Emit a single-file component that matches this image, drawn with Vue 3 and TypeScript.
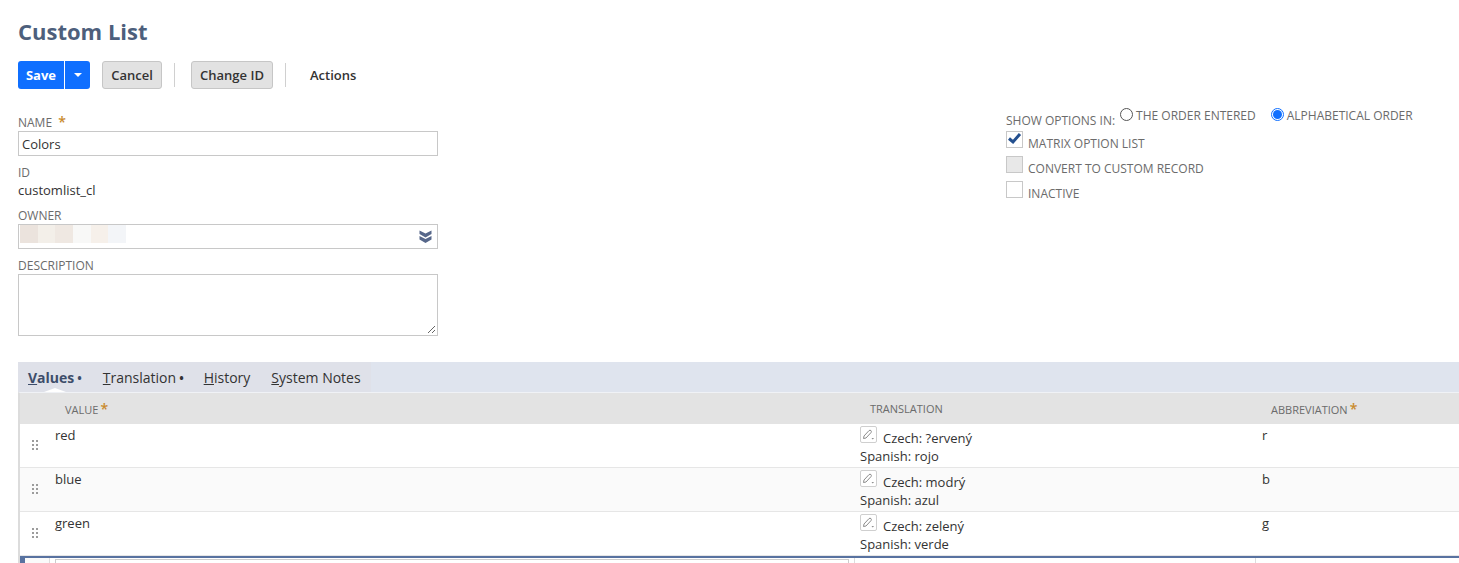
<script setup lang="ts">
interface Row { value: string; czech: string; spanish: string; abbr: string }
const rows: Row[] = [
  { value: 'red', czech: '?ervený', spanish: 'rojo', abbr: 'r' },
  { value: 'blue', czech: 'modrý', spanish: 'azul', abbr: 'b' },
  { value: 'green', czech: 'zelený', spanish: 'verde', abbr: 'g' },
]
const swatches = ['#ebe3dd', '#f3efe9', '#efe8e2', '#f8f8f7', '#f6f0ea', '#f3f5f8']
</script>

<template>
  <div class="page">
    <h1 class="title">Custom List</h1>

    <div class="toolbar">
      <div class="save">
        <span class="save-main">Save</span>
        <span class="save-arrow"><i class="caret"></i></span>
      </div>
      <button class="btn cancel">Cancel</button>
      <span class="sep sep-a"></span>
      <button class="btn change">Change ID</button>
      <span class="sep sep-b"></span>
      <span class="actions">Actions</span>
    </div>

    <div class="form">
      <div class="col-left">
        <div class="lbl name-lbl">NAME <span class="star name-star">*</span></div>
        <div class="input name-input">Colors</div>
        <div class="lbl id-lbl">ID</div>
        <div class="id-val">customlist_cl</div>
        <div class="lbl owner-lbl">OWNER</div>
        <div class="input owner-input">
          <div class="blur">
            <span v-for="(c, i) in swatches" :key="i" class="swatch" :style="{ background: c }"></span>
          </div>
          <svg class="dbl" width="13" height="13" viewBox="0 0 13 13">
            <path d="M0.5 0.5 L6.5 3.5 L12.5 0.5 V4 L6.5 7.5 L0.5 4 Z" fill="#56678a" />
            <path d="M0.5 6 L6.5 9 L12.5 6 V9.5 L6.5 13 L0.5 9.5 Z" fill="#56678a" />
          </svg>
        </div>
        <div class="lbl desc-lbl">DESCRIPTION</div>
        <div class="input desc-input">
          <svg class="grip" width="9" height="9" viewBox="0 0 9 9">
            <path d="M1 8 L8 1 M5 8 L8 5" stroke="#666" stroke-width="1" fill="none" />
          </svg>
        </div>
      </div>

      <div class="col-right">
        <div class="radios">
          <span class="lbl show-lbl">SHOW OPTIONS IN:</span>
          <span class="radio"></span>
          <span class="lbl radio-txt first">THE ORDER ENTERED</span>
          <span class="radio on"><i></i></span>
          <span class="lbl radio-txt">ALPHABETICAL ORDER</span>
        </div>
        <div class="check-row">
          <span class="check">
            <svg width="15" height="13" viewBox="0 0 15 13">
              <path d="M2 6.5 L6 10 L13 2" stroke="#24508f" stroke-width="3" fill="none" />
            </svg>
          </span>
          <span class="lbl">MATRIX OPTION LIST</span>
        </div>
        <div class="check-row">
          <span class="check disabled"></span>
          <span class="lbl">CONVERT TO CUSTOM RECORD</span>
        </div>
        <div class="check-row">
          <span class="check"></span>
          <span class="lbl">INACTIVE</span>
        </div>
      </div>
    </div>

    <div class="tabs-band">
      <div class="tabs">
        <span class="tab active"><u>V</u>alues<b class="dot">•</b></span>
        <span class="tab"><u>T</u>ranslation<b class="dot">•</b></span>
        <span class="tab wide"><u>H</u>istory</span>
        <span class="tab"><u>S</u>ystem Notes</span>
        <i class="notch"></i>
      </div>
    </div>

    <div class="grid">
      <div class="grid-head">
        <span class="c-value head-txt">VALUE<span class="star">*</span></span>
        <span class="c-trans head-txt">TRANSLATION</span>
        <span class="c-abbr head-txt">ABBREVIATION<span class="star">*</span></span>
      </div>
      <div v-for="(r, i) in rows" :key="r.value" class="grid-row" :class="{ alt: i === 1 }">
        <span class="drag"><i v-for="n in 6" :key="n"></i></span>
        <span class="cell-value">{{ r.value }}</span>
        <div class="cell-trans">
          <div class="line-1">
            <span class="edit">
              <svg width="15" height="15" viewBox="0 0 15 15">
                <path d="M2.5 11.5 L3 9 L8 3.6 Q9 2.8 10 3.6 Q10.8 4.6 10 5.6 L5 11 Z" fill="none" stroke="#8c8c8c" stroke-width="1" />
                <path d="M10.5 11 L13 11 L11.75 12.5 Z" fill="#8c8c8c" />
              </svg>
            </span>
            <span>Czech: {{ r.czech }}</span>
          </div>
          <div class="line-2">Spanish: {{ r.spanish }}</div>
        </div>
        <span class="cell-abbr">{{ r.abbr }}</span>
      </div>
      <div class="edit-row">
        <span class="edit-marker"></span>
        <span class="edit-drag"></span>
        <span class="edit-input"></span>
        <span class="edit-trans"></span>
        <span class="edit-abbr"></span>
      </div>
    </div>
  </div>
</template>

<style>
html, body { margin: 0; background: #fff; overflow: hidden; }
</style>

<style scoped>
.page {
  width: 1459px;
  height: 563px;
  overflow: hidden;
  font-family: "Open Sans", sans-serif;
  font-size: 13px;
  color: #333;
  box-sizing: border-box;
  padding-top: 16px;
}
.title {
  margin: 0 0 0 18px;
  font-size: 22px;
  line-height: 30px;
  font-weight: 700;
  color: #4d5f7c;
}
.toolbar {
  display: flex;
  align-items: center;
  margin: 15px 0 0 18px;
  height: 28px;
}
.save {
  display: flex;
  height: 28px;
  width: 72px;
  background: #0f6fff;
  border-radius: 3px;
  color: #fff;
  font-weight: 700;
}
.save-main {
  width: 46px;
  text-align: center;
  line-height: 28px;
  border-right: 1px solid #fff;
  box-sizing: content-box;
}
.save-arrow { flex: 1; display: flex; align-items: center; justify-content: center; }
.caret {
  border-left: 4px solid transparent;
  border-right: 4px solid transparent;
  border-top: 4px solid #fff;
}
.btn {
  height: 28px;
  padding: 0;
  background: #e2e2e2;
  border: 1px solid #c6c6c6;
  border-radius: 3px;
  font: 600 13px "Open Sans", sans-serif;
  color: #333;
  box-sizing: border-box;
}
.cancel { width: 60px; margin-left: 12px; }
.change { width: 82px; margin-left: 16px; }
.sep { width: 1px; height: 24px; background: #d0d0d0; }
.sep-a { margin-left: 12px; }
.sep-b { margin-left: 12px; }
.actions { margin-left: 24px; font-weight: 600; color: #333; }

.form { display: flex; height: 273px; }
.col-left { margin-left: 18px; width: 420px; padding-top: 25px; }
.col-right { margin-left: 568px; padding-top: 19px; }
.lbl { font-size: 12px; color: #6b6b6b; line-height: 16px; }
.star { color: #c98a2c; font-weight: 600; }
.name-star { margin-left: 3px; font-size: 14px; }
.name-lbl { height: 17px; }
.input {
  border: 1px solid #c8c8c8;
  box-sizing: border-box;
  width: 420px;
  background: #fff;
}
.name-input { height: 25px; line-height: 25px; padding-left: 3px; }
.id-lbl { margin-top: 9px; }
.id-val { line-height: 18px; }
.owner-lbl { margin-top: 9px; }
.owner-input { height: 25px; position: relative; }
.blur { display: flex; margin: 0 0 0 1px; height: 18px; }
.swatch { width: 17.7px; height: 18px; }
.dbl { position: absolute; right: 5px; top: 5px; }
.desc-lbl { margin-top: 9px; }
.desc-input { height: 62px; position: relative; }
.grip { position: absolute; right: 1px; bottom: 1px; }

.radios { display: flex; align-items: flex-start; height: 23px; }
.show-lbl { margin-top: 5px; }
.radio {
  width: 11px; height: 11px;
  border: 1px solid #555;
  border-radius: 50%;
  margin: 0 0 0 5px;
  display: flex; align-items: center; justify-content: center;
  flex: none;
}
.radio.on { border-color: #0f6fff; margin-left: 15px; }
.radio.on i { width: 9px; height: 9px; background: #0f6fff; border-radius: 50%; }
.radio-txt { margin-left: 3px; }
.check-row { display: flex; height: 25px; }
.check-row .lbl { margin: 5px 0 0 5px; }
.check {
  width: 17px; height: 17px;
  box-sizing: border-box;
  border: 1px solid #c8c8c8;
  background: #fff;
  display: block;
  flex: none;
  line-height: 0;
}
.check.disabled { background: #e8e8e8; }

.tabs-band {
  margin-left: 18px;
  height: 30px;
  background: #dfe4ee;
}
.tabs {
  position: relative;
  display: flex;
  align-items: center;
  height: 30px;
  width: 353px;
  background: #dfe1e9;
  padding-left: 10px;
  box-sizing: border-box;
  font-size: 14px;
  color: #333;
  white-space: nowrap;
}
.tab { margin-right: 20px; }
.tab.active { font-weight: 700; color: #3d4d6a; margin-right: 21px; }
.tab.wide { margin-right: 21px; }
.dot { margin-left: 3px; font-size: 12px; font-weight: 700; }
.notch {
  position: absolute;
  left: 26px; bottom: 0;
  border-left: 11px solid transparent;
  border-right: 11px solid transparent;
  border-bottom: 4px solid #fff;
}

.grid {
  margin-left: 18px;
  border-left: 2px solid #dcdcdc;
  border-top: 1px solid #f0f2f6;
}
.grid-head {
  display: flex;
  height: 31px;
  background: #e3e3e3;
  align-items: center;
  position: relative;
}
.head-txt { font-size: 11px; color: #6b6b6b; }
.head-txt .star { font-size: 14px; margin-left: 2px; }
.c-value { margin-left: 45px; width: 805px; }
.c-trans { width: 401px; }
.grid-row {
  display: flex;
  height: 43px;
  border-bottom: 1px solid #e6e6e6;
  background: #fff;
}
.grid-row.alt { background: #fafafa; }
.drag {
  width: 6px;
  margin: 16px 0 0 12px;
  display: grid;
  grid-template-columns: 2px 2px;
  column-gap: 2px;
  row-gap: 2px;
  grid-auto-rows: 2px;
  align-content: start;
}
.drag i { background: #9c9c9c; }
.cell-value { margin-left: 17px; width: 805px; line-height: 22px; }
.cell-trans { width: 402px; padding-top: 3px; line-height: 18px; }
.line-1 { display: flex; align-items: flex-end; height: 20px; }
.line-2 { line-height: 18px; }
.edit {
  width: 17px; height: 17px;
  box-sizing: border-box;
  border: 1px solid #cfcfcf;
  border-radius: 2px;
  background: #fff;
  margin-right: 6px;
  display: block;
  line-height: 0;
  margin-bottom: 4px;
}
.cell-abbr { line-height: 22px; }
.edit-row {
  display: flex;
  height: 10px;
  border-top: 2px solid #5872a0;
  background: #fff;
}
.edit-marker { width: 5px; background: #5872a0; }
.edit-drag { width: 25px; box-sizing: border-box; border-right: 1px solid #ddd; background: #fafafa; }
.edit-input { width: 794px; margin-left: 5px; border: 1px solid #ccc; box-sizing: border-box; margin-top: 1px; }
.edit-trans { width: 401px; border-left: 1px solid #ddd; margin-left: 5px; box-sizing: border-box; }
.edit-abbr { border-left: 1px solid #ddd; flex: 1; }
</style>
